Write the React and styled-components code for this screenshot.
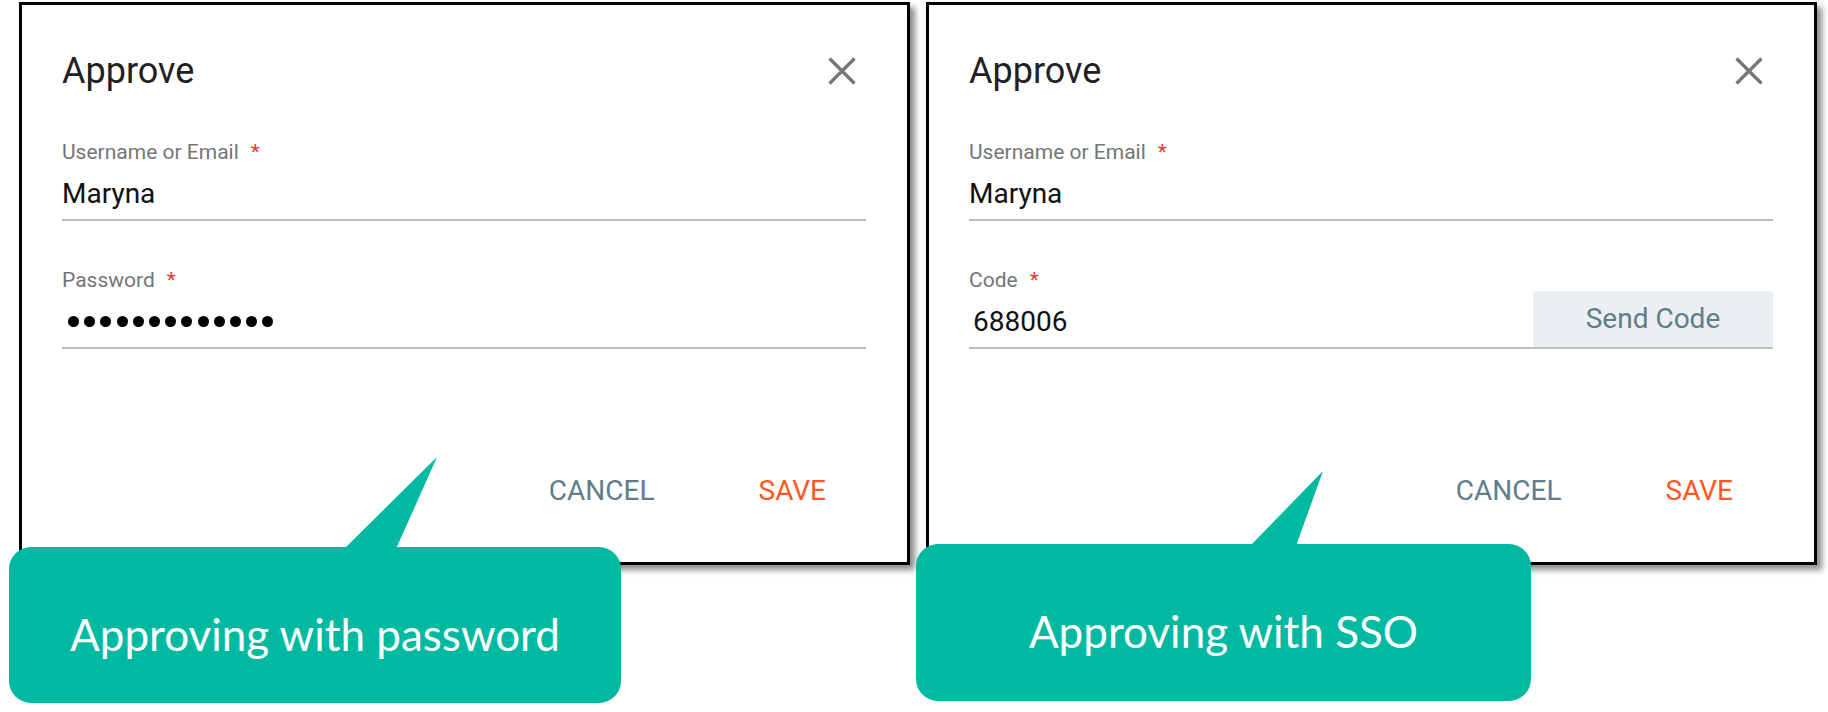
import React from 'react';
import styled, { createGlobalStyle } from 'styled-components';

const GlobalStyle = createGlobalStyle`
  html, body {
    margin: 0;
    padding: 0;
    background: #ffffff;
  }
  body {
    width: 1828px;
    height: 712px;
    overflow: hidden;
    font-family: Roboto, "Liberation Sans", Arial, sans-serif;
  }
`;

const Page = styled.main`
  display: flex;
  gap: 16px;
  padding: 2px 0 0 19px;
`;

const Panel = styled.section`
  position: relative;
`;

const Dialog = styled.div`
  box-sizing: border-box;
  width: 891px;
  height: 563px;
  border: 3px solid #000;
  background: #fff;
  box-shadow: 5px 5px 6px rgba(0, 0, 0, 0.45);
  display: flex;
  flex-direction: column;
  padding: 46px 41px 43px 40px;
`;

const Header = styled.header`
  display: flex;
  align-items: center;
  justify-content: space-between;
  height: 40px;
`;

const Title = styled.h2`
  margin: 0;
  font: 400 36px/40px Roboto, sans-serif;
  color: #212121;
`;

const CloseButton = styled.button`
  border: 0;
  background: none;
  padding: 10px;
  display: flex;
  color: #757575;
  cursor: pointer;
`;

const Field = styled.div`
  margin-top: ${(p) => p.$offset}px;
`;

const Label = styled.label`
  display: block;
  font: 400 21px/24px Roboto, sans-serif;
  color: #757575;
`;

const Required = styled.span`
  color: #e53935;
  margin-left: 12px;
`;

const InputRow = styled.div`
  display: flex;
  align-items: flex-end;
  height: 41px;
  margin-top: 14px;
  border-bottom: 2px solid #bdbdbd;
`;

const Value = styled.div`
  flex: 1;
  font: 400 28px/32px Roboto, sans-serif;
  color: #111;
  padding: 0 0 9px ${(p) => p.$inset || 0}px;
`;

const Dots = styled.div`
  flex: 1;
  display: flex;
  gap: 5.2px;
  padding: 0 0 20px 6px;
`;

const Dot = styled.span`
  width: 11px;
  height: 11px;
  border-radius: 50%;
  background: #000;
`;

const SendCode = styled.button`
  flex-shrink: 0;
  width: 240px;
  height: 56px;
  border: 0;
  border-radius: 4px 4px 0 0;
  background: #eceff1;
  color: #607d8b;
  font: 400 28px/32px Roboto, sans-serif;
  cursor: pointer;
`;

const Actions = styled.footer`
  margin-top: auto;
  display: flex;
  justify-content: flex-end;
  gap: 56px;
  padding-right: 16px;
`;

const ActionButton = styled.button`
  border: 0;
  background: none;
  padding: 12px 24px;
  font: 400 28px/32px Roboto, sans-serif;
  text-transform: uppercase;
  color: ${(p) => p.$color};
  cursor: pointer;
`;

const Callout = styled.div`
  position: absolute;
  z-index: 2;
  box-sizing: border-box;
  left: ${(p) => p.$left}px;
  top: ${(p) => p.$top}px;
  width: ${(p) => p.$width}px;
  height: ${(p) => p.$height}px;
  padding-top: 61px;
  border-radius: 22px;
  background: #00b9a1;
  display: flex;
  justify-content: center;
  color: #fff;
  font: 400 44px/1.2 Lato, "Open Sans", sans-serif;
`;

const Pointer = styled.svg`
  position: absolute;
  left: 0;
  overflow: visible;
`;

const CloseIcon = () => (
  <svg width="28" height="28" viewBox="0 0 28 28" aria-hidden="true">
    <path d="M1.5 1.5 L26.5 26.5 M26.5 1.5 L1.5 26.5" stroke="currentColor" strokeWidth="3.2" fill="none" />
  </svg>
);

function CalloutBubble({ left, top, width, height, pointer, children }) {
  const depth = -pointer.tip[1];
  return (
    <Callout $left={left} $top={top} $width={width} $height={height}>
      <Pointer
        width={width}
        height={depth + 2}
        style={{ top: -depth }}
        viewBox={`0 0 ${width} ${depth + 2}`}
      >
        <polygon
          points={`${pointer.base[0]},${depth + 2} ${pointer.tip[0]},0 ${pointer.base[1]},${depth + 2}`}
          fill="#00b9a1"
        />
      </Pointer>
      {children}
    </Callout>
  );
}

function ApproveDialog({ sso }) {
  return (
    <Dialog>
      <Header>
        <Title>Approve</Title>
        <CloseButton aria-label="Close">
          <CloseIcon />
        </CloseButton>
      </Header>
      <Field $offset={49}>
        <Label>
          Username or Email<Required>*</Required>
        </Label>
        <InputRow>
          <Value>Maryna</Value>
        </InputRow>
      </Field>
      <Field $offset={47}>
        <Label>
          {sso ? 'Code' : 'Password'}
          <Required>*</Required>
        </Label>
        <InputRow>
          {sso ? (
            <>
              <Value $inset={4}>688006</Value>
              <SendCode>Send Code</SendCode>
            </>
          ) : (
            <Dots>
              {Array.from({ length: 13 }).map((_, i) => (
                <Dot key={i} />
              ))}
            </Dots>
          )}
        </InputRow>
      </Field>
      <Actions>
        <ActionButton $color="#607d8b">Cancel</ActionButton>
        <ActionButton $color="#ff5722">Save</ActionButton>
      </Actions>
    </Dialog>
  );
}

export default function App() {
  return (
    <>
      <GlobalStyle />
      <Page>
        <Panel>
          <ApproveDialog />
          <CalloutBubble
            left={-10}
            top={545}
            width={612}
            height={156}
            pointer={{ base: [335, 387], tip: [428, -90] }}
          >
            Approving with password
          </CalloutBubble>
        </Panel>
        <Panel>
          <ApproveDialog sso />
          <CalloutBubble
            left={-10}
            top={542}
            width={615}
            height={157}
            pointer={{ base: [334, 380], tip: [407, -73] }}
          >
            Approving with SSO
          </CalloutBubble>
        </Panel>
      </Page>
    </>
  );
}
